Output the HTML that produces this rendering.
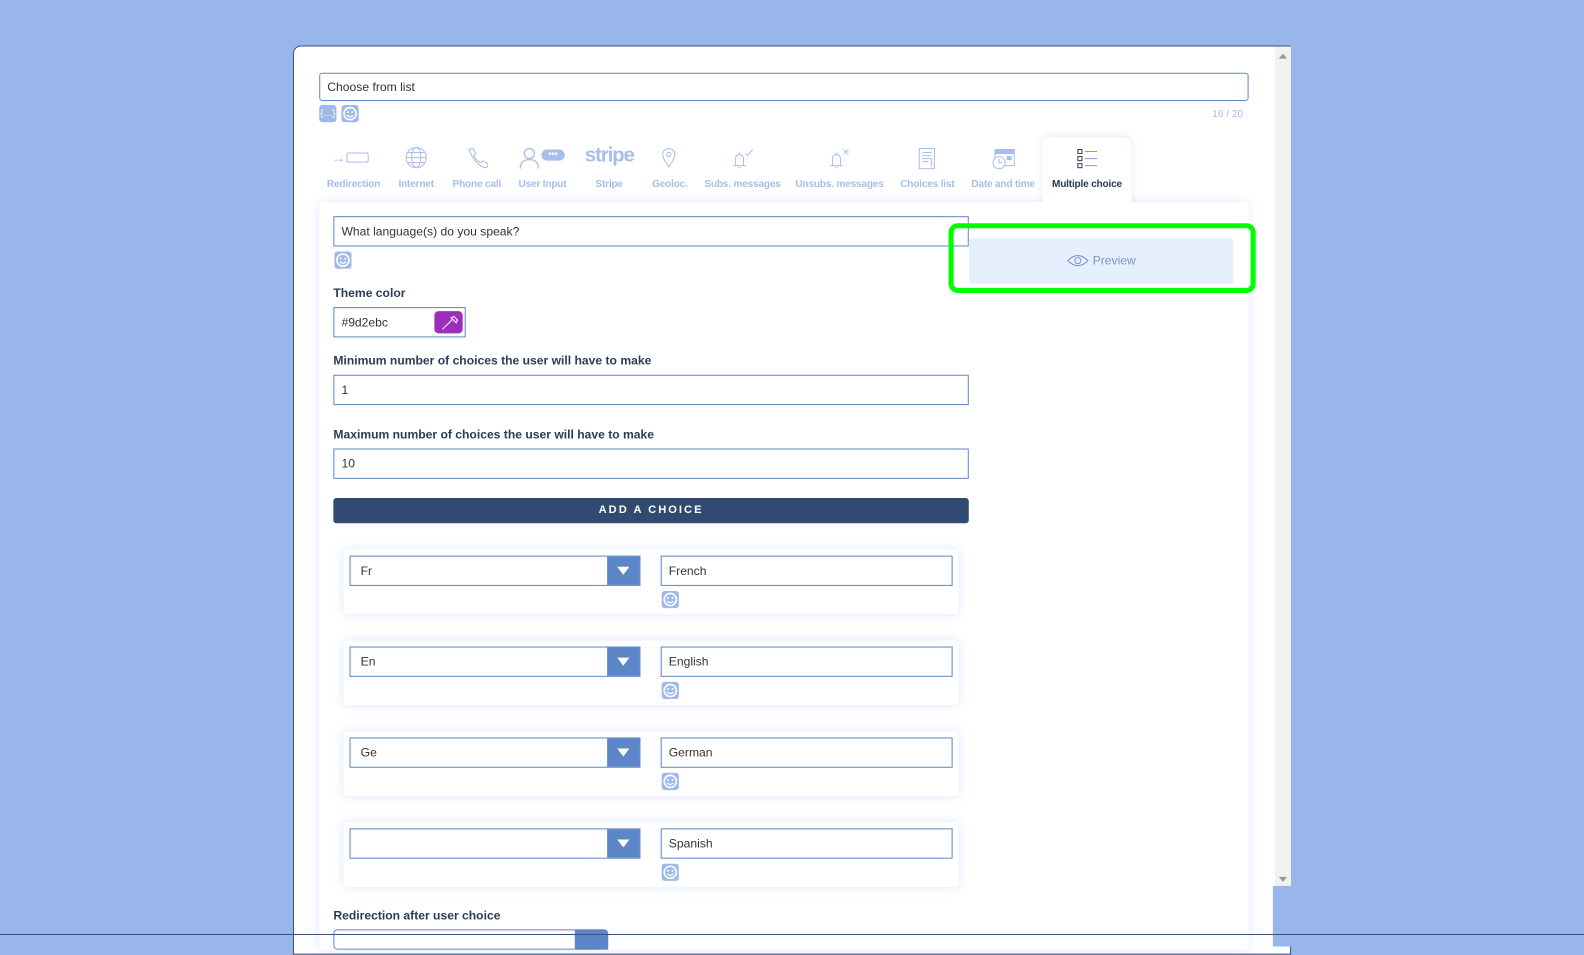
<!DOCTYPE html>
<html><head><meta charset="utf-8"><style>
*{box-sizing:border-box;margin:0;padding:0}
body{width:1584px;height:935px;background:#98b6ea;position:relative;overflow:hidden;font-family:"Liberation Sans",sans-serif;color:#333}
#w{position:absolute;left:0;top:0;width:1568px;height:926px;transform:scale(1.0102);transform-origin:0 0}
.modal{position:absolute;left:290px;top:45px;width:988px;height:900px;background:#fff;border:1px solid #3a4f7a;border-radius:8px 0 0 0}
.sb{position:absolute;left:1262px;top:46px;width:16px;height:831px;background:#f1f1f1}
.sb:before{content:"";position:absolute;left:4px;top:7px;border:4px solid transparent;border-bottom:5px solid #999;border-top:0}
.sb:after{content:"";position:absolute;left:4px;bottom:4px;border:4px solid transparent;border-top:5px solid #999;border-bottom:0}
.abs{position:absolute}
.inp{position:absolute;border:1px solid #5d86c8;background:#fff;font-size:12px;color:#333;padding-left:7px;display:flex;align-items:center}
.emo{position:absolute;width:17px;height:17px;background:#9fb9ea;border-radius:3px}
.emo svg{display:block}
.tab{position:absolute;top:177px;font-size:10px;font-weight:bold;color:#a7bdea;text-align:center;white-space:nowrap;font-family:"Liberation Sans Narrow","Liberation Sans",sans-serif;letter-spacing:-0.2px}
.lbl{position:absolute;font-size:12px;font-weight:bold;color:#2b3a55}
.card{position:absolute;left:340px;width:609px;height:64px;background:#fff;border-radius:4px;box-shadow:0 0 10px rgba(120,160,240,.25)}
.sel{position:absolute;left:346px;width:288px;height:30px;border:1px solid #5d86c8;background:#fff;font-size:12px;padding-left:10px;line-height:28px}
.sel b{position:absolute;right:0;top:0;width:32px;height:28px;background:#5d86c8}
.sel b:after{content:"";position:absolute;left:10px;top:10px;border:6px solid transparent;border-top:8px solid #fff;border-bottom:0}
</style></head><body>
<svg width="0" height="0" style="position:absolute"><symbol id="sm" viewBox="0 0 17 17"><circle cx="8.5" cy="8.5" r="6" fill="none" stroke="#fff" stroke-width="1.6"/><circle cx="6.3" cy="7" r="1" fill="#fff"/><circle cx="10.7" cy="7" r="1" fill="#fff"/><path d="M5.5 10 Q8.5 13 11.5 10" fill="none" stroke="#fff" stroke-width="1.3"/></symbol></svg>
<div id="w">
<div class="modal"></div>
<div class="sb"></div>
<div class="inp" style="left:316px;top:72px;width:920px;height:28px;border-radius:3px">Choose from list</div>
<div class="abs" style="left:316px;top:104px;width:17px;height:17px;background:#9fb9ea;border-radius:3px;color:#fff;font-size:9px;text-align:center;line-height:16px">{…}</div>
<div class="emo" style="left:338px;top:104px"><svg width="17" height="17"><use href="#sm"/></svg></div>
<div class="abs" style="left:1200px;top:108px;font-size:10px;color:#a7bdea">16 / 20</div>

<div class="abs" style="left:328px;top:150px;color:#a7bdea;font-size:14px;line-height:12px">→<span style="display:inline-block;width:22px;height:10px;border:1px solid #a7bdea;border-radius:2px;margin-left:1px"></span></div>
<svg class="abs" style="left:401px;top:145px" width="22" height="22" viewBox="0 0 22 22" fill="none" stroke="#a7bdea"><circle cx="11" cy="11" r="10"/><ellipse cx="11" cy="11" rx="4.5" ry="10"/><path d="M1 11h20M3 6h16M3 16h16"/></svg>
<svg class="abs" style="left:461px;top:145px" width="22" height="22" viewBox="0 0 22 22" fill="none" stroke="#a7bdea"><path d="M3 3l4-1 3 5-2 2q2 5 7 7l2-2 5 3-1 4q-10 0-18-18z"/></svg>
<svg class="abs" style="left:514px;top:145px" width="20" height="22" viewBox="0 0 20 22" fill="none" stroke="#a7bdea" stroke-width="1.3"><circle cx="10" cy="7" r="5"/><path d="M1 22q0-9 9-9t9 9"/></svg>
<div class="abs" style="left:536px;top:148px;width:23px;height:11px;background:#a7bdea;border-radius:6px;color:#fff;font-size:9px;text-align:center;line-height:8px;font-weight:bold">•••</div>
<div class="abs" style="left:579px;top:143px;color:#a7bdea;font-size:20px;font-weight:bold;letter-spacing:-1px">stripe</div>
<svg class="abs" style="left:655px;top:146px" width="14" height="20" viewBox="0 0 14 20" fill="none" stroke="#a7bdea"><path d="M7 19Q1 11 1 7a6 6 0 0 1 12 0q0 4-6 12z"/><circle cx="7" cy="7" r="2"/></svg>
<svg class="abs" style="left:722px;top:146px" width="26" height="22" viewBox="0 0 26 22" fill="none" stroke="#a7bdea"><path d="M4 18h12M6 18V11a4 4 0 0 1 8 0v7M10 7V5M9 20h2"/><path d="M16 6l2 2 5-6"/></svg>
<svg class="abs" style="left:818px;top:146px" width="26" height="22" viewBox="0 0 26 22" fill="none" stroke="#a7bdea"><path d="M4 18h12M6 18V11a4 4 0 0 1 8 0v7M10 7V5M9 20h2"/><path d="M17 2l5 5M22 2l-5 5"/></svg>
<svg class="abs" style="left:909px;top:146px" width="18" height="22" viewBox="0 0 18 22" fill="none" stroke="#a7bdea"><rect x="1" y="1" width="15" height="20"/><path d="M4 5h9M4 8h9M4 11h9M4 14h6M13 11v8"/></svg>
<svg class="abs" style="left:981px;top:147px" width="24" height="22" viewBox="0 0 24 22" fill="none" stroke="#a7bdea"><rect x="4" y="1" width="19" height="16" fill="#fff"/><rect x="4" y="1" width="19" height="4" fill="#a7bdea"/><circle cx="8" cy="14" r="6" fill="#fff"/><path d="M8 10v4h3"/><rect x="16" y="8" width="4" height="3" fill="#a7bdea"/></svg>
<div class="abs" style="left:1032px;top:136px;width:88px;height:70px;background:#fff;border-radius:8px 8px 0 0;box-shadow:0 -2px 8px rgba(120,160,240,.2)"></div>
<svg class="abs" style="left:1066px;top:147px" width="22" height="20" viewBox="0 0 22 20" fill="none" stroke="#2b3a55"><rect x="1" y="1" width="4" height="4"/><rect x="1" y="8" width="4" height="4"/><rect x="1" y="15" width="4" height="4"/><path d="M8 3h12M8 10h12M8 17h12" stroke="#8a9bd0"/></svg>

<div class="tab" style="left:320px;width:60px">Redirection</div>
<div class="tab" style="left:390px;width:44px">Internet</div>
<div class="tab" style="left:446px;width:52px">Phone call</div>
<div class="tab" style="left:510px;width:54px">User Input</div>
<div class="tab" style="left:580px;width:46px">Stripe</div>
<div class="tab" style="left:640px;width:46px">Geoloc.</div>
<div class="tab" style="left:696px;width:78px">Subs. messages</div>
<div class="tab" style="left:786px;width:90px">Unsubs. messages</div>
<div class="tab" style="left:888px;width:60px">Choices list</div>
<div class="tab" style="left:958px;width:70px">Date and time</div>
<div class="tab" style="left:1036px;width:80px;color:#2b3a55">Multiple choice</div>

<div class="abs" style="left:316px;top:200px;width:920px;height:740px;background:#fff;box-shadow:0 0 10px rgba(120,160,240,.25)"></div>
<div class="abs" style="left:1032px;top:190px;width:88px;height:16px;background:#fff"></div>

<div class="inp" style="left:330px;top:214px;width:629px;height:30px">What language(s) do you speak?</div>
<div class="emo" style="left:331px;top:249px"><svg width="17" height="17"><use href="#sm"/></svg></div>
<div class="abs" style="left:959px;top:236px;width:262px;height:45px;background:#e6effd;border-radius:3px;color:#7a93c8;font-size:12px;text-align:center;line-height:45px"><svg width="22" height="12" viewBox="0 0 22 12" style="vertical-align:-2px;margin-right:4px" fill="none" stroke="#7a93c8"><path d="M1 6Q11-4 21 6Q11 16 1 6z"/><circle cx="11" cy="6" r="3"/></svg>Preview</div>
<div class="abs" style="left:939px;top:221px;width:304px;height:69px;border:5px solid #00ff00;border-radius:9px"></div>

<div class="lbl" style="left:330px;top:283px">Theme color</div>
<div class="inp" style="left:330px;top:304px;width:131px;height:30px">#9d2ebc</div>
<div class="abs" style="left:430px;top:308px;width:28px;height:22px;background:#9d2ebc;border-radius:4px"><svg width="28" height="22" viewBox="0 0 28 22" fill="none" stroke="#fff"><path d="M8 18l10-10M16 6l6 6M19 5l4 4-2 2-4-4z"/></svg></div>
<div class="lbl" style="left:330px;top:350px">Minimum number of choices the user will have to make</div>
<div class="inp" style="left:330px;top:371px;width:629px;height:30px">1</div>
<div class="lbl" style="left:330px;top:423px">Maximum number of choices the user will have to make</div>
<div class="inp" style="left:330px;top:444px;width:629px;height:30px">10</div>
<div class="abs" style="left:330px;top:493px;width:629px;height:25px;background:#314a72;border-radius:3px;color:#fff;font-size:11px;font-weight:bold;letter-spacing:2px;text-align:center;line-height:25px">ADD A CHOICE</div>

<div class="card" style="top:544px"></div>
<div class="sel" style="top:550px">Fr<b></b></div>
<div class="inp" style="left:654px;top:550px;width:289px;height:30px">French</div>
<div class="emo" style="left:655px;top:585px"><svg width="17" height="17"><use href="#sm"/></svg></div>
<div class="card" style="top:634px"></div>
<div class="sel" style="top:640px">En<b></b></div>
<div class="inp" style="left:654px;top:640px;width:289px;height:30px">English</div>
<div class="emo" style="left:655px;top:675px"><svg width="17" height="17"><use href="#sm"/></svg></div>
<div class="card" style="top:724px"></div>
<div class="sel" style="top:730px">Ge<b></b></div>
<div class="inp" style="left:654px;top:730px;width:289px;height:30px">German</div>
<div class="emo" style="left:655px;top:765px"><svg width="17" height="17"><use href="#sm"/></svg></div>
<div class="card" style="top:814px"></div>
<div class="sel" style="top:820px"><b></b></div>
<div class="inp" style="left:654px;top:820px;width:289px;height:30px">Spanish</div>
<div class="emo" style="left:655px;top:855px"><svg width="17" height="17"><use href="#sm"/></svg></div>

<div class="lbl" style="left:330px;top:899px">Redirection after user choice</div>
<div class="abs" style="left:330px;top:920px;width:272px;height:20px;border:1px solid #5d86c8;border-radius:4px"></div>
<div class="abs" style="left:569px;top:920px;width:33px;height:20px;background:#5d86c8;border-radius:0 4px 0 0"></div>
<div class="abs" style="left:1260px;top:877px;width:30px;height:60px;background:#98b6ea"></div>
</div>
<div class="abs" style="left:0;top:934px;width:1584px;height:1px;background:#3a4f7a"></div>
</body></html>
